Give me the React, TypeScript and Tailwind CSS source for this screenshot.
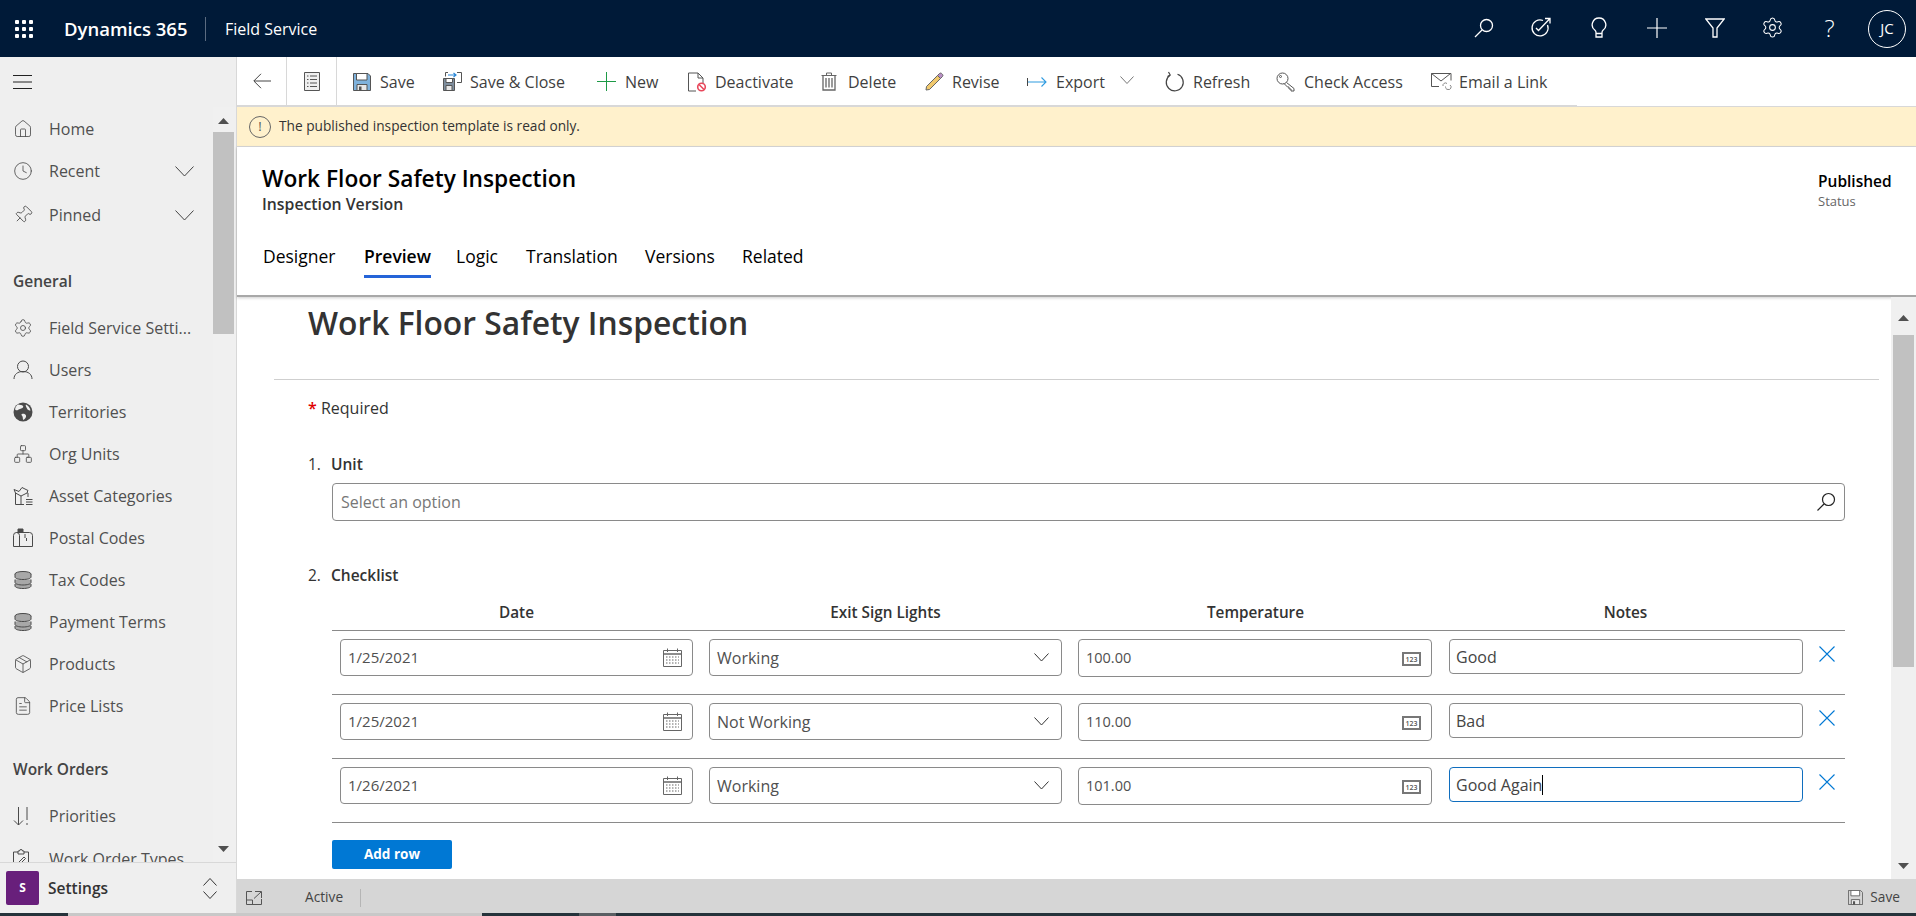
import React from 'react';
import { Clock, FileText, House, Network, Package, Pin, Settings } from 'lucide-react';

const font = "font-['Open_Sans',sans-serif]";

function SaveGlyph({ size = 18, fill = '#7fb2dc' }: { size?: number; fill?: string }) {
  return (
    <svg width={size} height={size} viewBox="0 0 18 18" fill="none">
      <path d="M.5.5h14.5l2.500 2.500v14.500H.5z" fill={fill} stroke="#555" />
      <path d="M3.500.5h10.500v6.500H3.500z" fill="#fff" stroke="#555" />
      <path d="M4 11.500h10v6H4z" fill="#e8e8e8" stroke="#555" />
      <path d="M6 13.500h2.500v4H6z" fill="#555" />
    </svg>
  );
}

function SaveCloseGlyph() {
  return (
    <svg width="19" height="19" viewBox="0 0 19 19" fill="none">
      <path d="M.5 6.500h11v12H.5z" fill="#7f8f9f" stroke="#555" />
      <path d="M3 6.500h6.500v4H3z" fill="#fff" stroke="#555" />
      <path d="M3 13.500h6v5H3z" fill="#e8e8e8" stroke="#555" />
      <path d="M5 .5H2.500v4M14 .5h4.500v10H14" stroke="#555" />
      <path d="M5 3h8M10.500 1l2.500 2-2.500 2" stroke="#2b88d8" strokeWidth="1.200" />
    </svg>
  );
}

function DeactivateGlyph() {
  return (
    <svg width="20" height="20" viewBox="0 0 20 20" fill="none">
      <path d="M1.500 1h9.500l5 5v5M11 1v5h5M9 19H1.500V1" stroke="#555" />
      <circle cx="14.500" cy="15" r="3.800" stroke="#e8475b" strokeWidth="1.600" fill="#fff" />
      <path d="M12 12.500l5 5" stroke="#e8475b" strokeWidth="1.600" />
    </svg>
  );
}

function TrashGlyph() {
  return (
    <svg width="16" height="19" viewBox="0 0 16 19" fill="none" stroke="#666">
      <path d="M.5 3.500h15M5.500 3.500V1h5v2.500" />
      <path d="M2 3.500v14.500h12V3.500" strokeWidth="1.300" />
      <path d="M5 6v9.500M8 6v9.500M11 6v9.500" strokeWidth="1.300" />
    </svg>
  );
}

function PencilGlyph() {
  return (
    <svg width="19" height="19" viewBox="0 0 19 19" fill="none">
      <path d="M4.500 17.500L1 18l.5-3.500L12.500 3.500l3 3z" fill="#f1c96d" stroke="#666" />
      <path d="M12.500 3.500l2-2c.6-.6 1.500-.6 2.100 0l.9.9c.6.6.6 1.500 0 2.100l-2 2z" fill="#b88fc4" stroke="#666" />
    </svg>
  );
}

function ExportGlyph() {
  return (
    <svg width="20" height="12" viewBox="0 0 20 12" fill="none">
      <path d="M.5 2v8" stroke="#444" />
      <path d="M1 6h18M14.500 1.500L19 6l-4.500 4.500" stroke="#2f9be0" strokeWidth="1.100" />
    </svg>
  );
}

function RefreshGlyph() {
  return (
    <svg width="20" height="22" viewBox="0 0 20 22" fill="none" stroke="#444" strokeWidth="1.200">
      <path d="M12.500 3.300a8.500 8.500 0 1 1-7.500 1" />
      <path d="M3.500 1l1.700 3L2.500 5.500" />
    </svg>
  );
}

function KeyGlyph() {
  return (
    <svg width="20" height="20" viewBox="0 0 20 20" fill="none" stroke="#555">
      <circle cx="6.500" cy="6.500" r="5.500" />
      <circle cx="4.500" cy="4.500" r="1" />
      <path d="M10.500 10.500l7.500 6v2.500h-3v-2h-2v-2h-1.500l-3.500-3.500" />
    </svg>
  );
}

function MailLinkGlyph() {
  return (
    <svg width="21" height="19" viewBox="0 0 21 19" fill="none" stroke="#555">
      <path d="M8 14.500H.5V1.500h19.500v7" />
      <path d="M.5 1.500L10 9l9.500-7.500" />
      <path d="M12 14a2.500 2.500 0 0 1 4-2.500M19 13a2.500 2.500 0 0 1-2 4.500c-2 0-2.500-1.500-2.500-3" stroke="#888" />
    </svg>
  );
}

function UserGlyph() {
  return (
    <svg width="20" height="20" viewBox="0 0 20 20" fill="none" stroke="#4a4a4a">
      <circle cx="10" cy="6.500" r="5.500" />
      <path d="M1 19c0-4.500 3.500-7.500 9-7.500s9 3 9 7.500" />
    </svg>
  );
}

function EarthGlyph() {
  return (
    <svg width="20" height="20" viewBox="0 0 20 20">
      <circle cx="10" cy="10" r="9.500" fill="#4a4a4a" />
      <path d="M5 2.500c2 .5 4 0 5 1.500s-1.500 2.500-3 3-3 2-4.500 1c-1-.7.5-4.500 2.500-5.500zM13 2.500c2 1 4 3 4.500 6-1.500 0-3-.5-3.500-2s-2-3-1-4zM9 12c1.500-.5 3.500 0 4 1.500s-1 3.500-2.500 4.500c-1-1-.5-2.500-1-3.500S7.500 12.500 9 12z" fill="#efefef" />
    </svg>
  );
}

function AssetGlyph() {
  return (
    <svg width="20" height="20" viewBox="0 0 20 20" fill="none" stroke="#4a4a4a">
      <path d="M2.500 7v11.500H11M2.500 7l5.500 3v8.500M8 10l7-3.500M2.500 7L1 3.500l5 2 3-4 6 3-1 2" />
      <path d="M13 13.500h6.500M13 16h6.500M13 18.500h6.500M15 7v4" />
    </svg>
  );
}

function MailboxGlyph() {
  return (
    <svg width="20" height="20" viewBox="0 0 20 20" fill="none" stroke="#4a4a4a">
      <path d="M.5 18.500V7.500a3 3 0 0 1 3-3h13a3 3 0 0 1 3 3v11z" />
      <path d="M6.500 18.500v-11a3 3 0 0 0-3-3M12 10V6M13.500 10v3" />
      <path d="M5 1h5v3H5z" fill="#4a4a4a" />
    </svg>
  );
}

function CoinsGlyph() {
  return (
    <svg width="20" height="18" viewBox="0 0 20 18" fill="#a8a8a8" stroke="#4a4a4a">
      <ellipse cx="10" cy="3" rx="8" ry="2.500" />
      <path d="M2 3v3c0 1.400 3.600 2.500 8 2.500s8-1.100 8-2.500V3M2 8.500v3c0 1.400 3.600 2.500 8 2.500s8-1.100 8-2.500v-3M2 13v2c0 1.400 3.600 2.500 8 2.500s8-1.100 8-2.500v-2" />
    </svg>
  );
}

function PriorityGlyph() {
  return (
    <svg width="16" height="20" viewBox="0 0 16 20" fill="none" stroke="#4a4a4a">
      <path d="M5.500 1v18M1 14.500L5.500 19 10 14.500M14 1v13M14 17v2" />
    </svg>
  );
}

function ClipboardGlyph() {
  return (
    <svg width="16" height="20" viewBox="0 0 16 20" fill="none" stroke="#4a4a4a">
      <path d="M5 3H.5v16.500h15V3H11M5 5V2h1.500a1.500 1.500 0 0 1 3 0H11v3z" />
      <path d="M4 15l7-7 1.500 1.500-7 7H4z" />
    </svg>
  );
}

function CalendarGlyph() {
  return (
    <svg width="19" height="19" viewBox="0 0 19 19" fill="none" stroke="#666">
      <path d="M.5 2.500h18v16H.5z" />
      <path d="M.5 6h18" strokeWidth="1.500" />
      <path d="M4.500.5V4M14.500.5V4" />
      <path d="M3 9h13M3 12h13M3 15h13" strokeDasharray="1.500 1.500" strokeWidth="1" />
    </svg>
  );
}

function NumberGlyph() {
  return (
    <div className="mt-[2px] flex h-[14px] w-[19px] items-center justify-center border-2 border-[#777] text-[7px] leading-none font-semibold text-[#555]">
      123
    </div>
  );
}

function Chevron({ width, color = '#444', up }: { width: number; color?: string; up?: boolean }) {
  const height = width / 2 + 1;
  return (
    <svg width={width} height={height} viewBox={`0 0 ${width} ${height}`} fill="none" stroke={color} className={up ? 'rotate-180' : ''}>
      <path d={`M.5 .5L${width / 2} ${height - 0.5}L${width - 0.5} .5`} />
    </svg>
  );
}

function ScrollArrow({ up }: { up?: boolean }) {
  return (
    <svg width="11" height="6" viewBox="0 0 11 6" className={up ? '' : 'rotate-180'}>
      <path d="M5.500 0L11 6H0z" fill="#505050" />
    </svg>
  );
}

const navIcon = { size: 20, strokeWidth: 1, color: '#4a4a4a' };

function NavRow({ icon, label, chevron }: { icon: React.ReactNode; label: string; chevron?: boolean }) {
  return (
    <div className="flex h-[42px] shrink-0 items-center">
      <div className="flex w-[49px] shrink-0 justify-start pl-[13px]">{icon}</div>
      <span className="text-[16px] whitespace-nowrap text-[#505050]">{label}</span>
      {chevron && (
        <div className="mr-[19px] ml-auto">
          <Chevron width={19} />
        </div>
      )}
    </div>
  );
}

function SectionTitle({ label }: { label: string }) {
  return <div className="flex h-[42px] shrink-0 items-center pl-[13px] text-[15.5px] font-semibold text-[#444]">{label}</div>;
}

const commands = [
  { label: 'Save', width: 'w-[90px]', gap: 'w-[27px]', icon: <SaveGlyph /> },
  { label: 'Save & Close', width: 'w-[154px]', gap: 'w-[27px]', icon: <SaveCloseGlyph /> },
  {
    label: 'New',
    width: 'w-[90px]',
    gap: 'w-[28px]',
    icon: (
      <svg width="19" height="19" viewBox="0 0 19 19" stroke="#1d9a46">
        <path d="M9.500 0v19M0 9.500h19" />
      </svg>
    ),
  },
  { label: 'Deactivate', width: 'w-[134px]', gap: 'w-[28px]', icon: <DeactivateGlyph /> },
  { label: 'Delete', width: 'w-[104px]', gap: 'w-[27px]', icon: <TrashGlyph /> },
  { label: 'Revise', width: 'w-[102px]', gap: 'w-[27px]', icon: <PencilGlyph /> },
  { label: 'Export', width: 'w-[93px]', gap: 'w-[29px]', icon: <ExportGlyph /> },
];

const trailingCommands = [
  { label: 'Refresh', width: 'w-[111px]', gap: 'w-[28px]', icon: <RefreshGlyph /> },
  { label: 'Check Access', width: 'w-[155px]', gap: 'w-[28px]', icon: <KeyGlyph /> },
  { label: 'Email a Link', width: 'w-[140px]', gap: 'w-[28px]', icon: <MailLinkGlyph /> },
];

function Command({ label, width, gap, icon }: { label: string; width: string; gap: string; icon: React.ReactNode }) {
  return (
    <div className={`flex shrink-0 items-center ${width}`}>
      <div className={`flex shrink-0 items-center ${gap}`}>{icon}</div>
      <span className="text-[16px] whitespace-nowrap text-[#3f3f3f]">{label}</span>
    </div>
  );
}

const tabs = [
  { label: 'Designer', width: 'w-[101px]' },
  { label: 'Preview', width: 'w-[92px]', active: true },
  { label: 'Logic', width: 'w-[70px]' },
  { label: 'Translation', width: 'w-[119px]' },
  { label: 'Versions', width: 'w-[97px]' },
  { label: 'Related', width: 'w-[80px]' },
];

const rows = [
  { date: '1/25/2021', light: 'Working', temp: '100.00', note: 'Good' },
  { date: '1/25/2021', light: 'Not Working', temp: '110.00', note: 'Bad' },
  { date: '1/26/2021', light: 'Working', temp: '101.00', note: 'Good Again', focused: true },
];

function Field({ children, tall }: { children: React.ReactNode; tall?: boolean }) {
  return (
    <div
      className={`flex shrink-0 items-center rounded-sm border border-[#8a8a8a] bg-white pr-[10px] pl-[7px] text-[#505050] ${
        tall ? 'h-[38px] w-[354px]' : 'h-[37px] w-[353px]'
      }`}
    >
      {children}
    </div>
  );
}

export default function App() {
  return (
    <div className={`flex h-[916px] w-[1916px] flex-col overflow-hidden bg-white ${font}`}>
      <header className="flex h-[57px] shrink-0 items-center bg-[#001a38] text-white">
        <div className="ml-[15px] grid w-[18px] grid-cols-3 gap-[3px]">
          {Array.from({ length: 9 }).map((_, i) => (
            <span key={i} className="h-1 w-1 rounded-[1px] bg-white" />
          ))}
        </div>
        <span className="ml-[31px] w-[141px] text-[18.5px] font-semibold whitespace-nowrap">Dynamics 365</span>
        <div className="h-6 w-px bg-[#5b6b80]" />
        <span className="ml-[19px] text-[16px] whitespace-nowrap">Field Service</span>
        <div className="ml-auto flex items-center pr-[10px]">
          <div className="-mt-[2px] flex w-[57px] justify-center">
            <svg width="20" height="20" viewBox="0 0 20 20" fill="none" stroke="#fff" strokeWidth="1.300">
              <circle cx="12.500" cy="7.500" r="6" />
              <path d="M8 12L1 19" />
            </svg>
          </div>
          <div className="-mt-[2px] flex w-[57px] justify-center">
            <svg width="21" height="21" viewBox="0 0 21 21" fill="none" stroke="#fff" strokeWidth="1.300">
              <path d="M17.500 8a8 8 0 1 1-4.500-4.500" />
              <path d="M6 11l2.500 2.500L19.500 2M15 1.500h5v5" />
            </svg>
          </div>
          <div className="-mt-[2px] flex w-[59px] justify-center">
            <svg width="16" height="21" viewBox="0 0 16 21" fill="none" stroke="#fff" strokeWidth="1.300">
              <path d="M8 1a6.800 6.800 0 0 0-4 12.300c.7.6 1 1.200 1 2.200V20h6v-4.500c0-1 .3-1.600 1-2.200A6.800 6.800 0 0 0 8 1zM5 16.500h6" />
            </svg>
          </div>
          <div className="-mt-[2px] flex w-[58px] justify-center">
            <svg width="20" height="20" viewBox="0 0 20 20" stroke="#fff" strokeWidth="1.200">
              <path d="M10 0v20M0 10h20" />
            </svg>
          </div>
          <div className="-mt-[2px] flex w-[58px] justify-center">
            <svg width="20" height="20" viewBox="0 0 20 20" fill="none" stroke="#fff" strokeWidth="1.300">
              <path d="M.8 1h18.400L12 10v9H8v-9z" />
            </svg>
          </div>
          <div className="-mt-[2px] flex w-[57px] justify-center">
            <Settings size={23} strokeWidth={1.100} />
          </div>
          <div className="-mt-[2px] flex w-[57px] justify-center text-[24px] leading-none font-light">?</div>
          <div className="ml-[10px] flex h-[38px] w-[38px] items-center justify-center rounded-full border border-white text-[15px]">JC</div>
        </div>
      </header>

      <div className="flex min-h-0 flex-1">
        <aside className="flex w-[237px] shrink-0 flex-col border-r border-[#d8d8d8] bg-[#efefef]">
          <div className="flex h-[50px] shrink-0 items-center pl-[13px]">
            <svg width="19" height="14" viewBox="0 0 19 14" stroke="#222">
              <path d="M0 .5h19M0 7h19M0 13.500h19" />
            </svg>
          </div>
          <div className="flex min-h-0 flex-1">
            <nav className="flex min-w-0 flex-1 flex-col overflow-hidden pt-px">
              <NavRow icon={<House {...navIcon} />} label="Home" />
              <NavRow icon={<Clock {...navIcon} />} label="Recent" chevron />
              <div className="mt-[2px]">
                <NavRow icon={<Pin {...navIcon} className="rotate-45" />} label="Pinned" chevron />
              </div>
              <div className="mt-[25px]">
                <SectionTitle label="General" />
              </div>
              <div className="mt-[4px]">
                <NavRow icon={<Settings {...navIcon} />} label="Field Service Setti..." />
              </div>
              <NavRow icon={<UserGlyph />} label="Users" />
              <NavRow icon={<EarthGlyph />} label="Territories" />
              <NavRow icon={<Network {...navIcon} />} label="Org Units" />
              <NavRow icon={<AssetGlyph />} label="Asset Categories" />
              <NavRow icon={<MailboxGlyph />} label="Postal Codes" />
              <NavRow icon={<CoinsGlyph />} label="Tax Codes" />
              <NavRow icon={<CoinsGlyph />} label="Payment Terms" />
              <NavRow icon={<Package {...navIcon} />} label="Products" />
              <NavRow icon={<FileText {...navIcon} />} label="Price Lists" />
              <div className="mt-[22px]">
                <SectionTitle label="Work Orders" />
              </div>
              <div className="mt-[4px]">
                <NavRow icon={<PriorityGlyph />} label="Priorities" />
              </div>
              <div className="mt-px">
                <NavRow icon={<ClipboardGlyph />} label="Work Order Types" />
              </div>
            </nav>
            <div className="flex w-[23px] shrink-0 flex-col items-start bg-[#f0f0f0]">
              <div className="flex h-[25px] w-[21px] items-center justify-center pt-[2px]">
                <ScrollArrow up />
              </div>
              <div className="h-[202px] w-[21px] bg-[#c1c1c1]" />
              <div className="flex-1" />
              <div className="flex h-[16px] w-[21px] items-start justify-center">
                <ScrollArrow />
              </div>
            </div>
          </div>
          <div className="flex h-[51px] shrink-0 items-center border-t border-[#d8d8d8] pl-[6px]">
            <div className="flex h-[34px] w-[33px] items-center justify-center rounded-[2px] bg-[#681f7b] text-[12px] font-bold text-white">S</div>
            <span className="ml-[9px] pt-[2px] text-[15.5px] font-semibold text-[#333]">Settings</span>
            <div className="mr-[19px] ml-auto flex flex-col items-center gap-[5px]">
              <Chevron width={14} color="#333" up />
              <Chevron width={14} color="#333" />
            </div>
          </div>
        </aside>

        <main className="flex min-w-0 flex-1 flex-col">
          <div className="flex h-[50px] shrink-0">
            <div className="flex h-full w-[1340px] shrink-0 items-center border-b-2 border-[#d8d8d8]">
              <div className="flex h-full w-[50px] items-center justify-center border-r border-[#d8d8d8]">
                <svg width="18" height="16" viewBox="0 0 18 16" fill="none" stroke="#444">
                  <path d="M18 8H1M8 .8L.8 8 8 15.200" />
                </svg>
              </div>
              <div className="flex h-full w-[50px] items-center justify-center border-r border-[#d8d8d8]">
                <svg width="16" height="19" viewBox="0 0 16 19" fill="#efefef" stroke="#555">
                  <path d="M.5.5h15v18H.5z" />
                  <path d="M3 4h1.500M6 4h7M3 7.500h1.500M6 7.500h7M3 11h1.500M6 11h7M3 14.500h1.500M6 14.500h7" />
                </svg>
              </div>
              <div className="ml-[16px] flex items-center pt-px">
                {commands.map((c) => (
                  <Command key={c.label} {...c} />
                ))}
                <div className="mr-[31px] -mt-[3px]">
                  <Chevron width={14} color="#777" />
                </div>
                {trailingCommands.map((c) => (
                  <Command key={c.label} {...c} />
                ))}
              </div>
            </div>
            <div className="flex-1 border-b border-[#d8d8d8]" />
          </div>

          <div className="flex h-10 shrink-0 items-center border-b border-[#d8d8d8] bg-[#fff1cc] pl-[12px]">
            <div className="flex h-[22px] w-[22px] items-center justify-center rounded-full border border-[#666] text-[13px] leading-none text-[#555]">!</div>
            <span className="ml-[8px] text-[13.7px] text-[#333]">The published inspection template is read only.</span>
          </div>

          <section className="flex h-[150px] shrink-0 flex-col border-b-2 border-[#a8a8a8] shadow-[0_1px_3px_rgba(0,0,0,0.2)]">
            <div className="flex justify-between pt-4 pr-[20px] pl-[25px]">
              <div>
                <h1 className="text-[22.7px] leading-8 font-semibold text-black">Work Floor Safety Inspection</h1>
                <div className="-mt-px text-[15.8px] leading-5 font-semibold text-[#333]">Inspection Version</div>
              </div>
              <div className="w-[78px] pt-[8px]">
                <div className="text-[15.5px] leading-5 font-semibold text-black">Published</div>
                <div className="text-[13px] leading-5 text-[#666]">Status</div>
              </div>
            </div>
            <nav className="mt-[27px] flex pl-[26px]">
              {tabs.map((t) => (
                <div key={t.label} className={`flex h-[37px] shrink-0 items-start ${t.width}`}>
                  <span
                    className={`h-[37px] pt-[3px] text-[17.5px] leading-6 whitespace-nowrap text-black ${
                      t.active ? 'border-b-[3px] border-[#2564d8] font-semibold' : ''
                    }`}
                  >
                    {t.label}
                  </span>
                </div>
              ))}
            </nav>
          </section>

          <div className="flex min-h-0 flex-1">
            <div className="min-w-0 flex-1 overflow-hidden pl-[37px] text-[#333]">
              <h2 className="mt-[4px] pl-[34px] text-[31.8px] leading-[44px] font-semibold text-[#333]">Work Floor Safety Inspection</h2>
              <div className="mt-[34px] h-px w-[1605px] bg-[#cfcfcf]" />
              <div className="mt-[18px] pl-[34px] text-[16px] leading-5">
                <span className="font-semibold text-[#e00000]">*</span> Required
              </div>
              <div className="mt-[36px] flex pl-[34px] text-[15.5px] leading-5 font-semibold">
                <span className="w-[23px] font-normal">1.</span>
                <span>Unit</span>
              </div>
              <div className="mt-[9px] ml-[58px] flex h-[38px] w-[1513px] items-center justify-between rounded-sm border border-[#8a8a8a] pr-[8px] pl-[8px] text-[16px] text-[#777]">
                <span>Select an option</span>
                <svg width="20" height="20" viewBox="0 0 20 20" fill="none" stroke="#222" strokeWidth="1.200">
                  <circle cx="12.500" cy="7.500" r="6" />
                  <path d="M8 12L1.500 18.500" />
                </svg>
              </div>
              <div className="mt-[44px] flex pl-[34px] text-[15.5px] leading-5 font-semibold">
                <span className="w-[23px] font-normal">2.</span>
                <span>Checklist</span>
              </div>
              <div className="mt-[17px] ml-[58px] w-[1513px]">
                <div className="flex h-[28px] pl-2 text-[15.3px] leading-5 font-semibold">
                  <div className="w-[353px] text-center">Date</div>
                  <div className="ml-4 w-[353px] text-center">Exit Sign Lights</div>
                  <div className="ml-[17px] w-[353px] text-center">Temperature</div>
                  <div className="ml-[17px] w-[353px] text-center">Notes</div>
                </div>
                {rows.map((r) => (
                  <div key={r.note} className="flex h-[64px] items-start border-t border-[#8a8a8a] pt-2 pl-2">
                    <Field>
                      <span className="flex-1 text-[15px]">{r.date}</span>
                      <CalendarGlyph />
                    </Field>
                    <div className="ml-4">
                      <Field>
                        <span className="flex-1 text-[16px]">{r.light}</span>
                        <div className="mr-[2px]">
                          <Chevron width={15} color="#333" />
                        </div>
                      </Field>
                    </div>
                    <div className="ml-[16px]">
                      <Field tall>
                        <span className="flex-1 pb-px text-[14.5px]">{r.temp}</span>
                        <NumberGlyph />
                      </Field>
                    </div>
                    <div
                      className={`ml-[17px] flex h-[35px] w-[354px] items-center rounded-sm border pl-[6px] text-[16px] text-[#444] ${
                        r.focused ? 'border-[#106ebe]' : 'border-[#8a8a8a]'
                      }`}
                    >
                      {r.note}
                      {r.focused && <span className="h-5 w-px bg-black" />}
                    </div>
                    <div className="ml-[16px] pt-[7px]">
                      <svg width="16" height="16" viewBox="0 0 16 16" stroke="#0078d4" strokeWidth="1.100">
                        <path d="M.5.5l15 15M15.500.5l-15 15" />
                      </svg>
                    </div>
                  </div>
                ))}
                <div className="flex h-[58px] items-start border-t border-[#8a8a8a] pt-[17px]">
                  <button className="h-[29px] w-[120px] rounded-[2px] bg-[#0078d4] text-[13.5px] leading-none font-bold text-white">Add row</button>
                </div>
              </div>
            </div>
            <div className="flex w-[25px] shrink-0 flex-col items-center bg-[#f0f0f0] pr-[1px]">
              <div className="flex h-[38px] items-center justify-center pt-[3px]">
                <ScrollArrow up />
              </div>
              <div className="h-[332px] w-[21px] bg-[#c1c1c1]" />
              <div className="flex-1" />
              <div className="flex h-[16px] items-start justify-center">
                <ScrollArrow />
              </div>
            </div>
          </div>

          <footer className="flex h-[34px] shrink-0 items-center bg-[#d6d6d6] pt-[3px] text-[13.7px] text-[#444]">
            <svg width="16" height="14" viewBox="0 0 16 14" fill="none" stroke="#555" className="ml-[9px]">
              <path d="M.5 5v8.500h15V8M.5 9h6v4.500M9 .5h6.500V7M15 1L8 7.500M.5 5V.5H6" />
            </svg>
            <span className="ml-[43px] w-[55px]">Active</span>
            <div className="h-[18px] w-px bg-[#b5b5b5]" />
            <div className="mr-[16px] ml-auto flex items-center gap-[7px]">
              <SaveGlyph size={15} fill="#d6d6d6" />
              <span>Save</span>
            </div>
          </footer>
        </main>
      </div>

      <div className="flex h-[3px] shrink-0">
        <div className="w-[68px] bg-[#25333b]" />
        <div className="w-[414px] bg-[#c8c8c8]" />
        <div className="w-[97px] bg-[#25333b]" />
        <div className="w-[37px] bg-[#5a5f63]" />
        <div className="flex-1 bg-[#25333b]" />
      </div>
    </div>
  );
}
